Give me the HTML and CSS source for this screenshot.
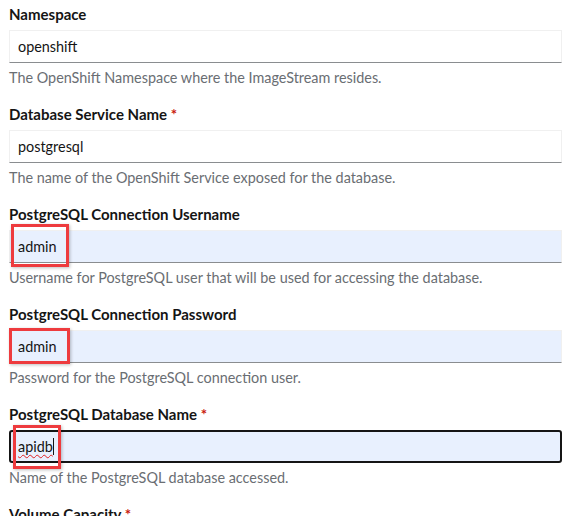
FILE: index.html
```html
<!DOCTYPE html>
<html lang="en">
<head>
<meta charset="utf-8">
<title>Template parameters</title>
<link rel="stylesheet" href="styles.css">
</head>
<body>
<form class="form">
  <div class="group">
    <div class="label">Namespace</div>
    <div class="field"><span class="value">openshift</span></div>
    <div class="help">The OpenShift Namespace where the ImageStream resides.</div>
  </div>
  <div class="group">
    <div class="label">Database Service Name <span class="req">*</span></div>
    <div class="field"><span class="value">postgresql</span></div>
    <div class="help">The name of the OpenShift Service exposed for the database.</div>
  </div>
  <div class="group">
    <div class="label">PostgreSQL Connection Username</div>
    <div class="field filled"><span class="value">admin</span><span class="mark mark-user"></span></div>
    <div class="help">Username for PostgreSQL user that will be used for accessing the database.</div>
  </div>
  <div class="group">
    <div class="label">PostgreSQL Connection Password</div>
    <div class="field filled"><span class="value">admin</span><span class="mark mark-pass"></span></div>
    <div class="help">Password for the PostgreSQL connection user.</div>
  </div>
  <div class="group">
    <div class="label">PostgreSQL Database Name <span class="req">*</span></div>
    <div class="field filled focused"><span class="value misspelled">apidb</span><span class="caret"></span><span class="mark mark-db"></span></div>
    <div class="help">Name of the PostgreSQL database accessed.</div>
  </div>
  <div class="group">
    <div class="label">Volume Capacity <span class="req">*</span></div>
  </div>
</form>
</body>
</html>
```
FILE: styles.css
```css
html, body {
  margin: 0;
  padding: 0;
  background: #ffffff;
}
body {
  font-family: "Lato", "Open Sans", sans-serif;
  font-size: 14.4px;
  color: #151515;
  overflow: hidden;
}
.form {
  padding: 4px 11px 0 9px;
  display: flex;
  flex-direction: column;
  gap: 16px;
}
.group {
  display: flex;
  flex-direction: column;
}
.label {
  font-size: 15px;
  font-weight: 700;
  line-height: 21px;
  height: 21px;
  margin-bottom: 5px;
  color: #151515;
}
.req {
  color: #c9190b;
}
.field {
  position: relative;
  box-sizing: border-box;
  height: 33px;
  width: 553px;
  border: 1px solid #f0f0f0;
  border-bottom-color: #8a8d90;
  padding: 0 8px;
  display: flex;
  align-items: center;
  background: #ffffff;
}
.field.filled {
  background: #e8f0fe;
}
.field.focused {
  border: 2px solid #151515;
  border-radius: 3px;
  padding: 0 7px;
}
.value {
  line-height: 21px;
}
.misspelled {
  text-decoration: underline wavy #e02020;
  text-decoration-thickness: 1px;
  text-underline-offset: 2px;
}
.caret {
  display: inline-block;
  width: 1px;
  height: 17px;
  background: #151515;
}
.help {
  margin-top: 4px;
  line-height: 21px;
  color: #6a6e73;
}
.mark {
  position: absolute;
  box-sizing: border-box;
  border: 3px solid #ee3b3e;
  box-shadow: 1px 1px 3px rgba(0, 0, 0, 0.25);
  pointer-events: none;
}
.mark-user {
  left: 1px;
  top: -7px;
  width: 58px;
  height: 43px;
}
.mark-pass {
  left: -1px;
  top: -3px;
  width: 61px;
  height: 36px;
}
.mark-db {
  left: 2px;
  top: -7px;
  width: 48px;
  height: 44px;
}
```
